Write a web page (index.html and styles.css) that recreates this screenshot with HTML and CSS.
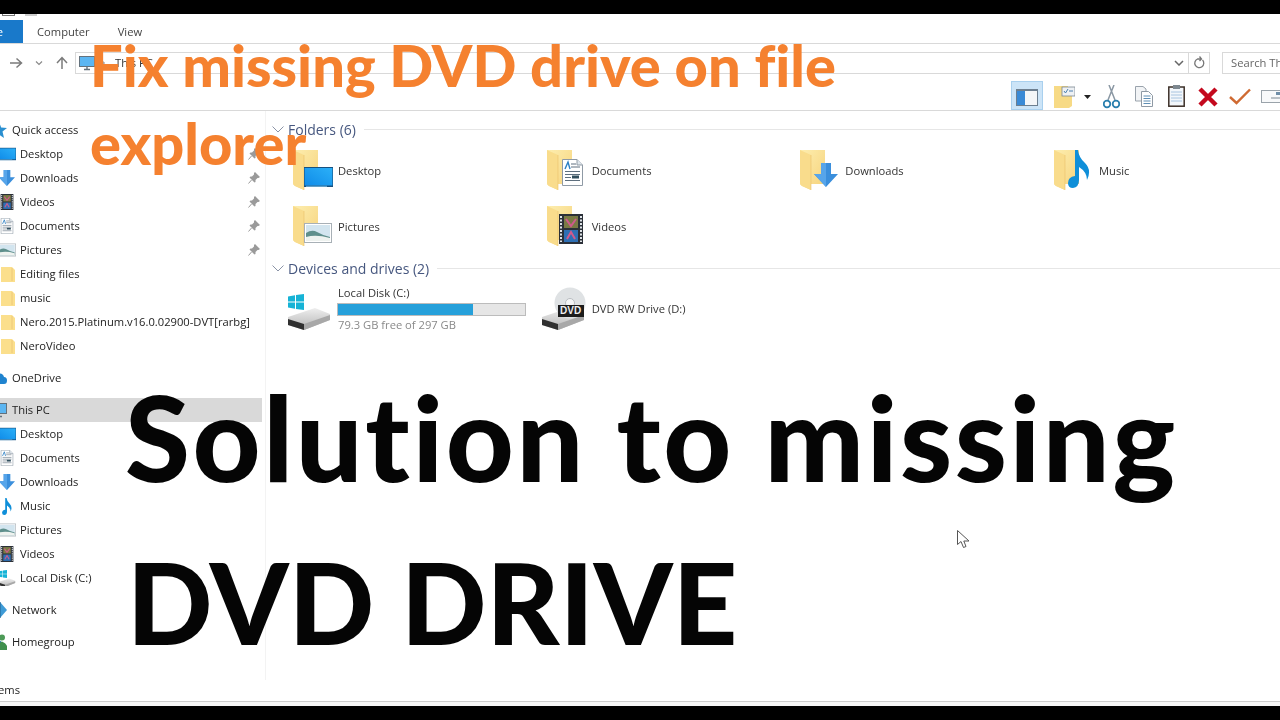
FILE: index.html
```html
<!DOCTYPE html>
<html lang="en">
<head>
<meta charset="utf-8">
<title>Solution to missing DVD drive</title>
<link rel="stylesheet" href="styles.css">
</head>
<body>
<svg class="defs" width="0" height="0" aria-hidden="true">
  <defs>
    <linearGradient id="fy" x1="0" x2="1" y1="0" y2="1"><stop offset="0" stop-color="#fdeeb0"/><stop offset="1" stop-color="#f6d27a"/></linearGradient>
    <linearGradient id="sc" x1="0" x2="1" y1="1" y2="0"><stop offset="0" stop-color="#0f8be8"/><stop offset="1" stop-color="#2bb0f8"/></linearGradient>
    <linearGradient id="hd" x1="0" x2="0" y1="0" y2="1"><stop offset="0" stop-color="#eeeeee"/><stop offset="1" stop-color="#b4b4b4"/></linearGradient>
    <symbol id="folder" viewBox="0 0 40 40">
      <path d="M0 0H25V34H11V40L2 36Q0 35 0 33Z" fill="url(#fy)"/>
      <path d="M0 0L11 5V40L2 36Q0 35 0 33Z" fill="#f9dc8c"/>
      <path d="M11 5V40" stroke="#eac069" stroke-width=".6"/>
    </symbol>
    <symbol id="screen" viewBox="0 0 29 20">
      <rect width="29" height="20" fill="#17507f"/>
      <rect x=".6" y="1" width="27.800" height="17.500" fill="url(#sc)"/>
      <path d="M2 19.300H23" stroke="#8ccdf0" stroke-width=".8"/>
    </symbol>
    <symbol id="docs" viewBox="0 0 21 27">
      <path d="M.5.5H15L20.500 6V26.500H.5Z" fill="#fff" stroke="#8f9aa5"/>
      <path d="M15 .5V6H20.500" fill="#dfe6ec" stroke="#8f9aa5"/>
      <path d="M3 10L6 3L8 10" fill="none" stroke="#2b7fc4" stroke-width="1.400"/>
      <path d="M9 5H14M9 8H18M3 12.500H18M3 15.500H18M3 18.500H9M3 21.500H18" stroke="#5e6f7e"/>
      <rect x="10" y="16.500" width="7" height="3" fill="#33505f"/>
    </symbol>
    <symbol id="arrow" viewBox="0 0 24 24">
      <path d="M7 0H17V11H24L12 24L0 11H7Z" fill="#3b8fdc"/>
      <path d="M7 0H12V24L0 11H7Z" fill="#57a5ea"/>
    </symbol>
    <symbol id="note" viewBox="0 0 22 38">
      <path d="M7 0H10Q11 8 17 13Q24 20 19 30Q19 22 11 17V30Q11 37 5 38Q0 38 0 33Q0 27 7 26Z" fill="#0f8fd9"/>
    </symbol>
    <symbol id="photo" viewBox="0 0 28 20">
      <rect x=".5" y=".5" width="27" height="19" fill="#fff" stroke="#a8b0b6"/>
      <rect x="2" y="2" width="24" height="16" fill="#d3e5ef"/>
      <path d="M2 10Q8 6 13 9T26 14V18H2Z" fill="#5f8f8c"/>
      <path d="M2 14Q12 11 26 15V18H2Z" fill="#eef2ef"/>
    </symbol>
    <symbol id="film" viewBox="0 0 24 30">
      <rect width="24" height="30" fill="#2b3038"/>
      <path d="M2 2V28M22 2V28" stroke="#dfe4e8" stroke-width="2" stroke-dasharray="2 1.500"/>
      <rect x="5" y="2" width="14" height="12" fill="#7a7a44"/>
      <rect x="5" y="16" width="14" height="12" fill="#2e6fb4"/>
      <path d="M7 5L12 12L17 5M8 25L12 18L16 25" stroke="#d05a8c" stroke-width="2" fill="none"/>
    </symbol>
    <symbol id="leaf" viewBox="0 0 14 16">
      <path d="M0 1H11L14 4V16H0Z" fill="#fbdf8c"/>
      <path d="M11 2V15" stroke="#edc878" stroke-width="1"/>
    </symbol>
    <symbol id="pin" viewBox="0 0 12 12">
      <path d="M7 0L12 5L10.500 6H9.500L7.500 8L7.500 10L6.500 10.500L1.500 5.500L2.500 4.500H4L6 2.500V1Z" fill="#9a9a9a"/>
      <path d="M3.500 8L.5 11.500" stroke="#9a9a9a"/>
    </symbol>
    <symbol id="disk" viewBox="0 0 44 36">
      <path d="M1 23L28 14L43 20V26L17 36L1 31Z" fill="url(#hd)"/>
      <path d="M1 25V31L17 36V30Z" fill="#303030"/>
      <path d="M17 30L43 21V26L17 36Z" fill="#a8a8a8"/>
    </symbol>
    <symbol id="win" viewBox="0 0 16 16">
      <path d="M0 2.500L7 1.300V7.500H0ZM8 1.100L16 0V7.500H8ZM0 8.500H7V14.700L0 13.500ZM8 8.500H16V16L8 14.900Z" fill="#16b3d6"/>
    </symbol>
    <symbol id="pc" viewBox="0 0 16 16">
      <rect x=".5" y="1.500" width="15" height="10" fill="#5cb6f2" stroke="#64727d"/>
      <path d="M5 14.500H11M8 11.500V14.500" stroke="#64727d" stroke-width="1.400"/>
    </symbol>
  </defs>
</svg>

<div class="bar-black bar-top"></div>
<div class="qat"><span class="qat-a"></span><span class="qat-b"></span></div>

<nav class="tabs">
  <div class="tab-file"><span>File</span></div>
  <span class="tab">Computer</span>
  <span class="tab">View</span>
</nav>

<div class="addr-row">
  <svg class="nav-ico nav-fwd" viewBox="0 0 14 14"><path d="M1 7H12M7.500 2.500L12.500 7L7.500 11.500" fill="none" stroke="#7b7b7b" stroke-width="1.500"/></svg>
  <svg class="nav-ico nav-drop" viewBox="0 0 8 6"><path d="M1 1.500L4 4.500L7 1.500" fill="none" stroke="#8a8a8a" stroke-width="1.200"/></svg>
  <svg class="nav-ico nav-up" viewBox="0 0 14 14"><path d="M7 13V2M2 7L7 1.500L12 7" fill="none" stroke="#7b7b7b" stroke-width="1.500"/></svg>
  <div class="addr">
    <svg class="addr-pc" viewBox="0 0 16 16"><use href="#pc"/></svg>
    <svg class="addr-sep" viewBox="0 0 6 8"><path d="M1 1L4.500 4L1 7" fill="none" stroke="#777"/></svg>
    <span class="addr-text">This PC</span>
    <svg class="addr-drop" viewBox="0 0 10 6"><path d="M1 1L5 5L9 1" fill="none" stroke="#666" stroke-width="1.500"/></svg>
    <div class="addr-refresh">
      <svg viewBox="0 0 12 13"><path d="M9.500 4A4.500 4.500 0 1 1 4.500 3H8M6.500 .5L8.500 3L6.500 5" fill="none" stroke="#777" stroke-width="1.300"/></svg>
    </div>
  </div>
  <div class="search">Search This PC</div>
</div>

<div class="toolbar">
  <div class="tool-on"><svg viewBox="0 0 22 17"><rect width="22" height="17" fill="#6d7f90"/><rect x="1" y="2" width="20" height="14" fill="#f4f6f8"/><rect x="1" y="2" width="8" height="14" fill="#3a8ad6"/></svg></div>
  <svg class="t-view" viewBox="0 0 21 22"><path d="M0 0H14V8H18V20L15 22H0Z" fill="#f7da85"/><rect x="8" y="1" width="13" height="9" fill="#eef1f4" stroke="#7a8791" stroke-width=".8"/><path d="M10 5L11.500 7L14 3M15 5H19" fill="none" stroke="#4a7fb0"/></svg>
  <svg class="t-caret" viewBox="0 0 7 4"><path d="M0 0H7L3.500 4Z" fill="#222"/></svg>
  <svg class="t-cut" viewBox="0 0 17 24"><path d="M11 0L5 15M6 0L12 15" stroke="#8a97a3" stroke-width="1.500"/><circle cx="4" cy="19" r="3.300" fill="none" stroke="#2a7fae" stroke-width="1.800"/><circle cx="13" cy="19" r="3.300" fill="none" stroke="#2a7fae" stroke-width="1.800"/></svg>
  <svg class="t-copy" viewBox="0 0 18 21"><path d="M.5.5H8L11 3V15H.5Z" fill="#f2f4f6" stroke="#9aa3ac"/><path d="M6.500 5.500H13.500L17.500 9.500V20.500H6.500Z" fill="#fff" stroke="#8f9aa5"/><path d="M8.500 10H15.500M8.500 12.500H15.500M8.500 15H15.500M8.500 17.500H15.500" stroke="#5f8fb5"/></svg>
  <svg class="t-paste" viewBox="0 0 17 22"><rect x=".8" y="2" width="15.400" height="19.200" fill="#f3f7fb" stroke="#3c3028" stroke-width="1.500"/><rect x="5" y="0" width="7" height="4" fill="#7d8890"/><path d="M3 7H14M3 10H14M3 13H14M3 16H14" stroke="#a8c4e0"/></svg>
  <svg class="t-del" viewBox="0 0 20 20"><path d="M2 2L18 18M18 2L2 18" stroke="#c4091e" stroke-width="4.500"/></svg>
  <svg class="t-ok" viewBox="0 0 22 17"><path d="M1 9L7.500 15L21 1.500" fill="none" stroke="#cf6a32" stroke-width="2.400"/></svg>
  <svg class="t-ren" viewBox="0 0 26 13"><rect x=".5" y=".5" width="25" height="12" fill="#f8f9fa" stroke="#9aa3aa"/><path d="M10 8H19" stroke="#7a8791"/><rect x="15" y="2" width="5" height="3" fill="#6f8ea8"/></svg>
</div>

<main class="main">
  <aside class="side">
    <div class="nav-group">
      <div class="row top"><svg class="ico" viewBox="0 0 16 16"><path d="M8 0L10.200 5.600L16 6L11.500 9.600L13 16L8 12.500L3 16L4.500 9.600L0 6L5.800 5.600Z" fill="#2a8fd0"/></svg><span>Quick access</span></div>
      <div class="row"><svg class="ico"><use href="#screen"/></svg><span>Desktop</span><svg class="pin"><use href="#pin"/></svg></div>
      <div class="row"><svg class="ico"><use href="#arrow"/></svg><span>Downloads</span><svg class="pin"><use href="#pin"/></svg></div>
      <div class="row"><svg class="ico"><use href="#film"/></svg><span>Videos</span><svg class="pin"><use href="#pin"/></svg></div>
      <div class="row"><svg class="ico"><use href="#docs"/></svg><span>Documents</span><svg class="pin"><use href="#pin"/></svg></div>
      <div class="row"><svg class="ico"><use href="#photo"/></svg><span>Pictures</span><svg class="pin"><use href="#pin"/></svg></div>
      <div class="row"><svg class="ico leaf"><use href="#leaf"/></svg><span>Editing files</span></div>
      <div class="row"><svg class="ico leaf"><use href="#leaf"/></svg><span>music</span></div>
      <div class="row"><svg class="ico leaf"><use href="#leaf"/></svg><span>Nero.2015.Platinum.v16.0.02900-DVT[rarbg]</span></div>
      <div class="row"><svg class="ico leaf"><use href="#leaf"/></svg><span>NeroVideo</span></div>
    </div>
    <div class="nav-group">
      <div class="row top"><svg class="ico" viewBox="0 0 16 16"><path d="M3 14H13Q16 14 16 10.500T13 7Q12 3 8 3.500T4 7Q0 8 0 11T3 14Z" fill="#1f83cf"/></svg><span>OneDrive</span></div>
    </div>
    <div class="nav-group">
      <div class="row top selected"><svg class="ico" viewBox="0 0 16 16"><use href="#pc"/></svg><span>This PC</span></div>
      <div class="row"><svg class="ico"><use href="#screen"/></svg><span>Desktop</span></div>
      <div class="row"><svg class="ico"><use href="#docs"/></svg><span>Documents</span></div>
      <div class="row"><svg class="ico"><use href="#arrow"/></svg><span>Downloads</span></div>
      <div class="row"><svg class="ico note"><use href="#note"/></svg><span>Music</span></div>
      <div class="row"><svg class="ico"><use href="#photo"/></svg><span>Pictures</span></div>
      <div class="row"><svg class="ico"><use href="#film"/></svg><span>Videos</span></div>
      <div class="row"><svg class="ico" viewBox="0 0 18 16"><use href="#disk" width="18" height="14" y="3"/><use href="#win" width="8" height="8" x="1" y="0"/></svg><span>Local Disk (C:)</span></div>
    </div>
    <div class="nav-group">
      <div class="row top"><svg class="ico" viewBox="0 0 16 16"><path d="M9 0L16 8L9 16L2 8Z" fill="#3f9bd6"/><path d="M9 0V16" stroke="#1e5f8c"/></svg><span>Network</span></div>
    </div>
    <div class="nav-group">
      <div class="row top"><svg class="ico" viewBox="0 0 16 16"><circle cx="11" cy="3.500" r="3" fill="#4d9a57"/><circle cx="8" cy="9" r="2.500" fill="#2a74b8"/><path d="M5 16Q5 10 11 7.500Q17 10 17 16Z" fill="#3f8f4d"/></svg><span>Homegroup</span></div>
    </div>
  </aside>

  <section class="content">
    <h2 class="group"><svg class="chev" viewBox="0 0 12 7"><path d="M.5.5L6 6L11.500.5" fill="none" stroke="#8a93a6"/></svg><span>Folders (6)</span><i class="rule"></i></h2>
    <div class="tiles">
      <div class="tile"><span class="ficon"><svg class="f"><use href="#folder"/></svg><svg class="o-screen"><use href="#screen"/></svg></span><span>Desktop</span></div>
      <div class="tile"><span class="ficon"><svg class="f"><use href="#folder"/></svg><svg class="o-docs"><use href="#docs"/></svg></span><span>Documents</span></div>
      <div class="tile"><span class="ficon"><svg class="f"><use href="#folder"/></svg><svg class="o-arrow"><use href="#arrow"/></svg></span><span>Downloads</span></div>
      <div class="tile"><span class="ficon"><svg class="f"><use href="#folder"/></svg><svg class="o-note"><use href="#note"/></svg></span><span>Music</span></div>
      <div class="tile"><span class="ficon"><svg class="f"><use href="#folder"/></svg><svg class="o-photo"><use href="#photo"/></svg></span><span>Pictures</span></div>
      <div class="tile"><span class="ficon"><svg class="f"><use href="#folder"/></svg><svg class="o-film"><use href="#film"/></svg></span><span>Videos</span></div>
    </div>
    <h2 class="group group-2"><svg class="chev" viewBox="0 0 12 7"><path d="M.5.5L6 6L11.500.5" fill="none" stroke="#8a93a6"/></svg><span>Devices and drives (2)</span><i class="rule"></i></h2>
    <div class="tiles drives">
      <div class="tile">
        <span class="dicon"><svg class="disk"><use href="#disk"/></svg><svg class="win"><use href="#win"/></svg></span>
        <div class="dinfo">
          <span>Local Disk (C:)</span>
          <div class="meter"><div class="meter-fill" style="width:72%"></div></div>
          <span class="free">79.3 GB free of 297 GB</span>
        </div>
      </div>
      <div class="tile">
        <span class="dicon"><svg class="disk"><use href="#disk"/></svg><svg class="cd" viewBox="0 0 32 32"><circle cx="16" cy="16" r="15.500" fill="#dfe2e4"/><circle cx="16" cy="16" r="4.500" fill="#f5f6f7" stroke="#b8bcc0"/></svg><b class="dvd">DVD</b></span>
        <span>DVD RW Drive (D:)</span>
      </div>
    </div>
  </section>
</main>

<footer class="status"><div class="status-line"><div class="status-count"><span>8 items</span></div></div></footer>
<div class="bar-black bar-bottom"></div>

<h1 class="t-orange">Fix missing DVD drive on file<br>explorer</h1>
<p class="t-black"><span class="t-line1">Solution to missing</span><br>DVD DRIVE</p>
<svg class="cursor" viewBox="0 0 13 19"><path d="M.5.5V14.500L4 11.500L6.500 17.500L9 16.500L6.800 11H12Z" fill="#fff" stroke="#555"/></svg>
</body>
</html>
```

FILE: styles.css
```css
* { box-sizing: border-box; }
html, body { margin: 0; height: 100%; }
body {
  width: 1280px;
  height: 720px;
  overflow: hidden;
  position: relative;
  display: flex;
  flex-direction: column;
  background: #fff;
  color: #222;
  font: 11.2px/16px "Open Sans", sans-serif;
  filter: blur(.35px);
}
.defs { position: absolute; }
.bar-black { background: #000; flex: none; }
.bar-top { height: 14px; }
.bar-bottom { height: 14px; }

.qat { height: 6px; display: flex; flex: none; }
.qat-a { width: 13px; height: 2px; margin-left: 2px; border: 1px solid #777; border-top: 0; }
.qat-b { width: 12px; height: 2px; margin-left: 10px; background: #ccc; }

.tabs { height: 24px; display: flex; align-items: center; flex: none; border-bottom: 1px solid #d9d9d9; }
.tab-file { width: 23px; height: 23px; background: #1979ca; color: #fff; overflow: hidden; display: flex; justify-content: flex-end; align-items: center; }
.tab-file span { flex: none; margin-right: 20px; }
.tab { color: #444; margin-left: 14px; margin-right: 14px; }

.addr-row { height: 37px; flex: none; display: flex; align-items: center; }
.nav-ico { flex: none; }
.nav-fwd { width: 14px; height: 14px; margin-left: 9px; }
.nav-drop { width: 8px; height: 6px; margin-left: 12px; }
.nav-up { width: 14px; height: 14px; margin-left: 12px; }
.addr { margin-left: 6px; width: 1135px; height: 22px; border: 1px solid #d9d9d9; display: flex; align-items: center; flex: none; }
.addr-pc { width: 16px; height: 16px; margin-left: 3px; flex: none; }
.addr-sep { width: 6px; height: 8px; margin-left: 5px; flex: none; }
.addr-text { margin-left: 9px; flex: 1; color: #333; }
.addr-drop { width: 10px; height: 6px; margin-right: 4px; flex: none; }
.addr-refresh { width: 21px; height: 20px; border-left: 1px solid #d9d9d9; display: flex; align-items: center; justify-content: center; flex: none; }
.addr-refresh svg { width: 12px; height: 13px; }
.search { margin-left: 12px; flex: none; width: 120px; height: 22px; border: 1px solid #d9d9d9; padding-left: 8px; line-height: 20px; color: #666; }

.toolbar { height: 29px; flex: none; display: flex; align-items: center; justify-content: flex-end; border-bottom: 1px solid #d9d9d9; box-sizing: content-box; }
.toolbar svg { flex: none; }
.tool-on { width: 32px; height: 29px; background: #cce4f7; border: 1px solid #a9d0ee; display: flex; align-items: flex-end; justify-content: center; padding-bottom: 3px; }
.tool-on svg { width: 22px; height: 17px; }
.t-view { width: 21px; height: 22px; margin-left: 11px; margin-top: 3px; }
.t-caret { width: 7px; height: 4px; margin-left: 9px; margin-top: 3px; }
.t-cut { width: 17px; height: 24px; margin-left: 12px; margin-top: 3px; }
.t-copy { width: 18px; height: 21px; margin-left: 15px; margin-top: 1px; }
.t-paste { width: 17px; height: 22px; margin-left: 15px; margin-top: 1px; }
.t-del { width: 20px; height: 20px; margin-left: 13px; margin-top: 3px; }
.t-ok { width: 22px; height: 17px; margin-left: 11px; margin-top: 1px; }
.t-ren { width: 26px; height: 13px; margin-left: 10px; margin-right: -7px; margin-top: 2px; }

.main { flex: 1; display: flex; min-height: 0; }
.side { width: 266px; flex: none; padding: 7px 3px 0 0; border-right: 1px solid #f3f3f3; }
.nav-group { margin-bottom: 8px; }
.row { height: 24px; display: flex; align-items: center; white-space: nowrap; }
.row > span { margin-left: 4px; flex: 1; }
.row .ico { width: 18px; height: 16px; margin-left: -2px; flex: none; }
.row .leaf { width: 14px; height: 16px; margin-left: 1px; margin-right: 1px; }
.row .note { width: 12px; height: 17px; margin-left: 1px; margin-right: 3px; }
.row.top .ico { width: 16px; height: 16px; margin-left: -9px; margin-right: 1px; }
.selected { background: #d9d9d9; }
.pin { width: 12px; height: 12px; margin-right: 2px; flex: none; }

.content { flex: 1; min-width: 0; padding: 8px 0 0 6px; }
.group { margin: 0; height: 20px; display: flex; align-items: center; font-size: 14px; font-weight: 400; color: #46577f; white-space: nowrap; padding-top: 1px; }
.group-2 { margin-top: 3px; }
.chev { width: 12px; height: 7px; flex: none; margin-right: 4px; }
.rule { flex: 1; height: 1px; background: #e6e6e6; margin-left: 8px; }
.tiles { display: grid; grid-template-columns: repeat(4, 253.67px); grid-auto-rows: 56px; margin: 3px 0 0 15px; padding-top: 1px; }
.tile { display: flex; align-items: center; padding-left: 6px; white-space: nowrap; color: #333; }
.ficon { position: relative; width: 40px; height: 40px; flex: none; margin-right: 5px; margin-top: -2px; }
.ficon svg { position: absolute; }
.f { left: 0; top: 0; width: 40px; height: 40px; }
.o-screen { left: 11px; top: 17px; width: 29px; height: 20px; }
.o-docs { left: 15px; top: 9px; width: 21px; height: 27px; }
.o-arrow { left: 14px; top: 13px; width: 24px; height: 24px; }
.o-note { left: 14px; top: 0; width: 22px; height: 38px; }
.o-photo { left: 11px; top: 17px; width: 28px; height: 20px; }
.o-film { left: 12px; top: 8px; width: 24px; height: 30px; }

.drives { grid-auto-rows: 50px; margin-top: 5px; }
.dicon { position: relative; width: 44px; height: 44px; flex: none; margin: 0 7px 0 -6px; }
.dicon svg { position: absolute; }
.disk { left: 0; bottom: 1px; width: 44px; height: 36px; }
.win { left: 1px; top: 7px; width: 16px; height: 16px; }
.cd { left: 13px; top: 0; width: 32px; height: 32px; }
.dvd { position: absolute; left: 17px; top: 18px; width: 26px; height: 12px; background: #1c1c1c; color: #eee; font: 700 10px/12px "Liberation Sans", sans-serif; text-align: center; }
.dinfo { display: flex; flex-direction: column; }
.meter { width: 189px; height: 13px; margin: 2px 0 1px -1px; background: #e6e6e6; border: 1px solid #bcbcbc; }
.meter-fill { height: 100%; background: #26a0da; }
.free { color: #8a8a8a; }

.status { height: 26px; flex: none; background: #f6f6f6; }
.status-line { height: 22px; background: #fff; border-bottom: 1px solid #ccc; }
.status-count { width: 20px; height: 20px; overflow: hidden; display: flex; justify-content: flex-end; align-items: center; white-space: nowrap; }
.status-count span { flex: none; }

.t-orange { position: absolute; left: 90px; top: 26px; margin: 0; font: 900 57.8px/78px Lato, sans-serif; color: #f5812f; white-space: nowrap; font-variant-ligatures: none; }
.t-black { position: absolute; left: 127px; top: 355px; margin: 0; font: 900 112.5px/163px Lato, sans-serif; color: #050505; white-space: nowrap; font-variant-ligatures: none; }
.t-line1 { font-size: 118px; letter-spacing: 2.6px; margin-left: -2px; }
.cursor { position: absolute; left: 957px; top: 530px; width: 13px; height: 19px; }
```
